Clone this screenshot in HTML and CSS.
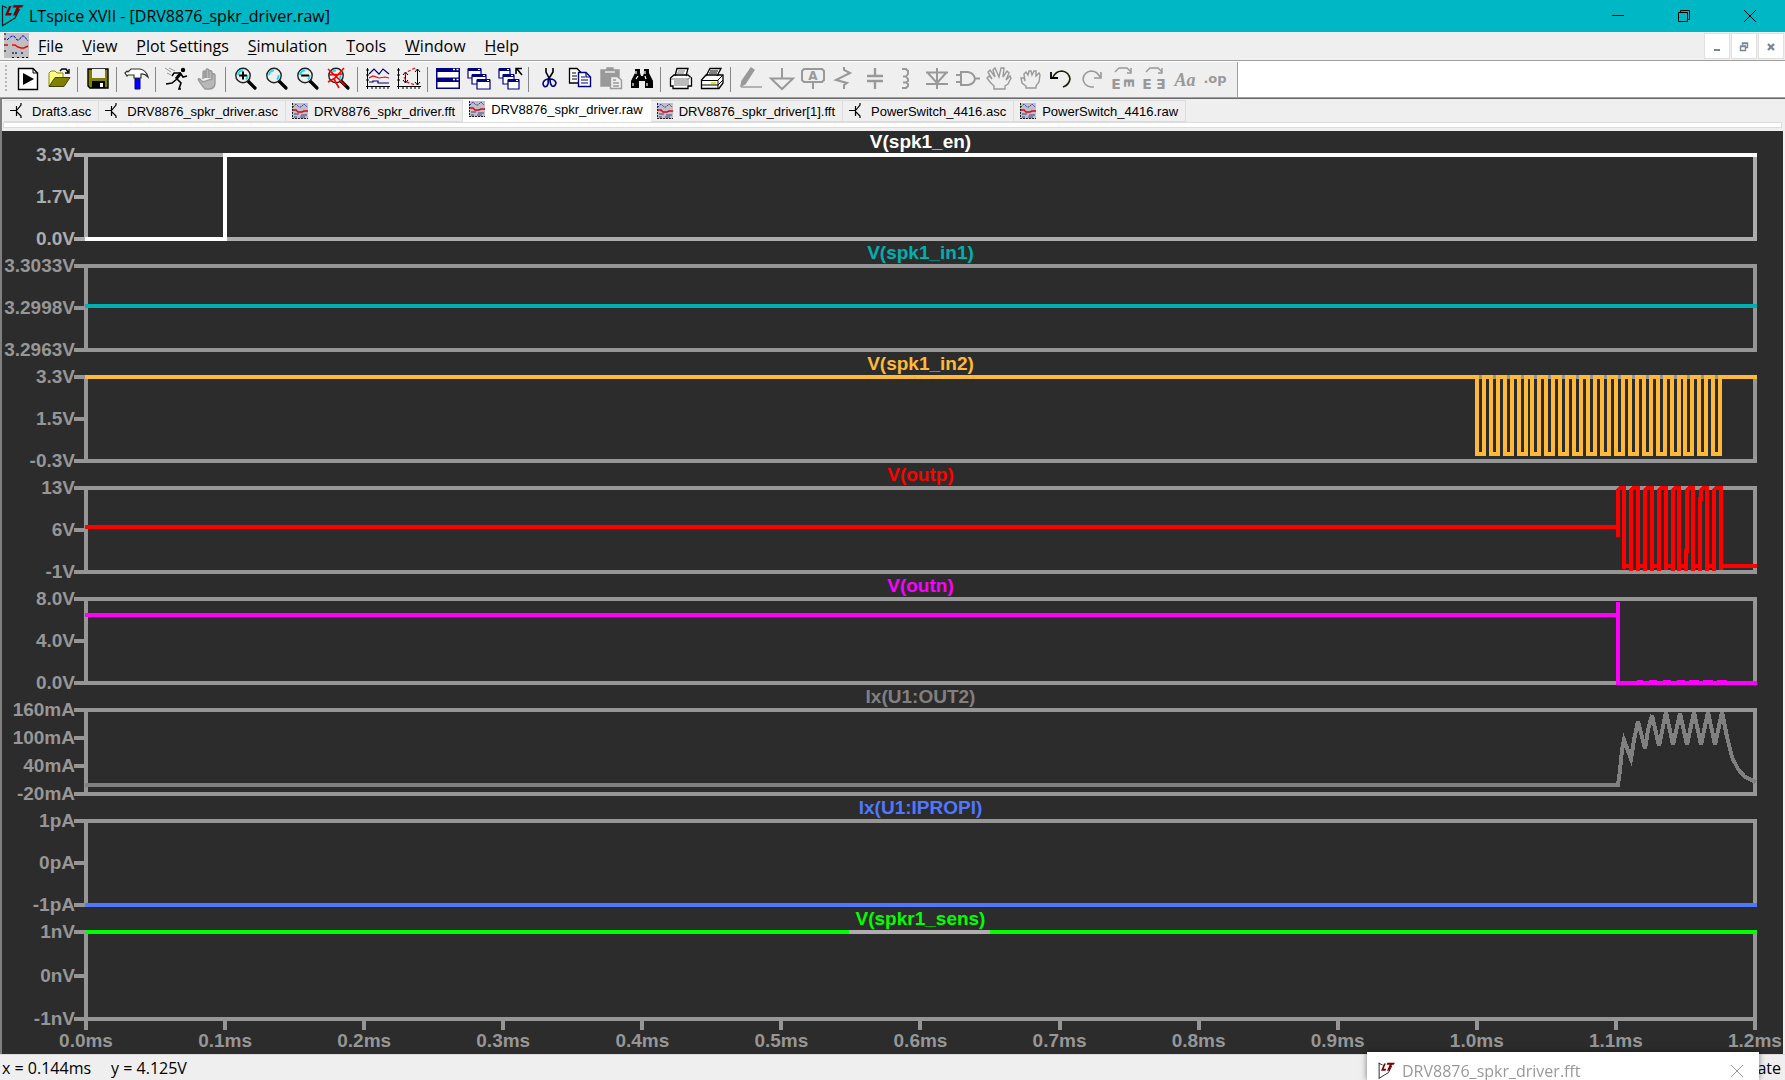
FILE: index.html
```html
<!DOCTYPE html>
<html lang="en">
<head>
    <meta charset="UTF-8">
    <meta name="viewport" content="width=device-width, initial-scale=1.0">
    <title>LTspice XVII - [DRV8876_spkr_driver.raw]</title>
    <link rel="stylesheet" href="styles.css">
</head>
<body>
    <svg class="defs" aria-hidden="true">
        <symbol id="logo" viewBox="0 0 24 24">
            <path d="M1.500 1V22M1 1.500L6 4M1 22L14 14L18.500 5" fill="none" stroke="#1a1a1a" stroke-width="1.200"/>
            <path d="M8 2H10.500L7.500 9H11L10 11.500H4Z" fill="#800000"/>
            <path d="M12.500 1H22.500L21 3.500H18.500L15 11.500H12L15.500 3.500H11.500Z" fill="#800000"/>
        </symbol>
        <symbol id="wave" viewBox="0 0 25 25">
            <rect width="25" height="25" fill="#c0c0c0"/>
            <path d="M3 7L5 5L8 3L10 3L13 7L15 7L18 3L20 3L24 8" fill="none" stroke="#0000ff" stroke-dasharray="3 1"/>
            <path d="M2 12H4M8 12H11L14 14L17 15H20L24 13" fill="none" stroke="#f00" stroke-width="1.4"/>
            <path d="M9 19V21M12 19V21M18 19V21" stroke="#000080" stroke-width="1.2"/>
            <path d="M0 1H2M0 6H2M0 12H2M0 18H2M8 24.5H10M13 24.5H15M18 24.5H20M22 24.5H24" stroke="#000"/>
        </symbol>
        <symbol id="trace" viewBox="0 0 16 16">
            <rect width="16" height="16" fill="#c0c0c0"/>
            <path d="M1 4L4 1L7 4L9 4L12 1L15 4" fill="none" stroke="#3030e0" stroke-dasharray="2 1"/>
            <path d="M1 7H4L6 9H10L12 8H16" fill="none" stroke="#e00020" stroke-width="1.4"/>
            <path d="M2 11H7M9 12H15M2 14H5M8 14H13" stroke="#404090"/>
            <path d="M.5 0V16M0 15.5H16" stroke="#222" stroke-dasharray="2 1"/>
        </symbol>
        <symbol id="gate" viewBox="0 0 16 16">
            <path d="M0 7.5H6M6.5 3V13M7 7L11 2V0M7 9L11 13V15" fill="none" stroke="#000" stroke-width="1.2"/>
        </symbol>
        <symbol id="lens" viewBox="0 0 24 24">
            <path d="M14 14L21 21" stroke="#000" stroke-width="3.2" stroke-linecap="round"/>
            <circle cx="9" cy="8.5" r="7.2" fill="#efefef" stroke="#222" stroke-width="1.4"/>
            <path d="M4 8A5 5 0 0 1 9 3.500M12 12.500A5 5 0 0 0 13.500 8" fill="none" stroke="#00e5f0" stroke-width="1.800"/>
        </symbol>
    </svg>

    <header class="titlebar">
        <svg class="logo"><use href="#logo"/></svg>
        <h1>LTspice XVII - [DRV8876_spkr_driver.raw]</h1>
        <div class="window-buttons">
            <button aria-label="Minimize"><svg viewBox="0 0 12 12"><path d="M0 5.500H12"/></svg></button>
            <button aria-label="Restore"><svg viewBox="0 0 12 12"><path d="M.5 2.500H9.500V11.500H.5ZM2.500 2V.5H11.500V9.500H10"/></svg></button>
            <button aria-label="Close"><svg viewBox="0 0 12 12"><path d="M0 0L12 12M12 0L0 12"/></svg></button>
        </div>
    </header>

    <nav class="menubar">
        <svg class="menu-icon"><use href="#wave"/></svg>
        <button><u>F</u>ile</button>
        <button><u>V</u>iew</button>
        <button><u>P</u>lot Settings</button>
        <button><u>S</u>imulation</button>
        <button><u>T</u>ools</button>
        <button><u>W</u>indow</button>
        <button><u>H</u>elp</button>
        <div class="child-buttons">
            <button aria-label="Minimize plot"><svg viewBox="0 0 10 10"><path d="M2 8H8" stroke-width="2"/></svg></button>
            <button aria-label="Restore plot"><svg viewBox="0 0 10 10"><path d="M3.500 3V1.500H8.500V5.500H7M1.500 4.500H6.500V8.500H1.500ZM1 4H7M3 1H9" stroke-width="1.400"/></svg></button>
            <button aria-label="Close plot"><svg viewBox="0 0 10 10"><path d="M2 2L8 8M8 2L2 8" stroke-width="2.400"/></svg></button>
        </div>
    </nav>

    <div class="toolbar-row">
        <div class="toolbar" role="toolbar" aria-label="Main toolbar">
            <span class="grip"></span>
            <button aria-label="Run"><svg viewBox="0 0 24 24"><path d="M2.500 1.500H17L21.500 6V22.500H2.500Z" fill="#fff" stroke="#000" stroke-width="1.400"/><path d="M17 1.500V6H21.500" fill="none" stroke="#000"/><path d="M7 6L18 12L7 18Z"/></svg></button>
            <button aria-label="Open"><svg viewBox="0 0 24 24"><path d="M2 19V6L4 4H8L10 6H16V10" fill="#ffff80" stroke="#888800"/><path d="M2 19.500L8 10.500H23L17 19.500Z" fill="#808000" stroke="#404000"/><path d="M13 4L15 2H19L21 5M22 2V6H18" fill="none" stroke="#000" stroke-width="1.400"/></svg></button>
            <span class="sep"></span>
            <button aria-label="Save"><svg viewBox="0 0 24 24"><path d="M2 2H22V21H4L2 19Z" fill="#808000" stroke="#000" stroke-width="1.400"/><path d="M6 2H19V11H6Z" fill="#efefef"/><path d="M6 14H19V21H6Z"/><path d="M14 16H17V20H14Z" fill="#fff"/></svg></button>
            <span class="sep"></span>
            <button aria-label="Control panel"><svg viewBox="0 0 24 24"><path d="M10 11H15V22H10Z" fill="#0000ff" stroke="#000080"/><path d="M0 6L2 4L3 5L6 2H15Q21 3 23 10Q19 6 16 7V11H9V8H6L3 8L2 9Z" fill="#fff" stroke="#333" stroke-width="1.200"/></svg></button>
            <span class="sep"></span>
            <button aria-label="Run simulation"><svg viewBox="0 0 24 24"><circle cx="19" cy="3" r="2.200"/><path d="M17 6L12 12" stroke="#000" stroke-width="3"/><path d="M13 12L17 16L15 22H17M13 12L8 16L2 17M17 6L10 6L8 9M17 7L19 10L23 9" fill="none" stroke="#000" stroke-width="1.600"/><path d="M1 1L7 5M5 1L11 4M3 6L7 8" stroke="#999"/></svg></button>
            <button aria-label="Halt"><svg viewBox="0 0 24 24" class="off"><path d="M8 12V5Q9 3 10 5V11M11 11V3Q12 1 14 3V11M14 11V4Q16 3 17 5V12M17 12V7Q19 6 20 8V17Q19 22 14 22H10Q7 19 4 14Q2 11 5 12L8 15Z" fill="#b8b8b8"/></svg></button>
            <span class="sep"></span>
            <button aria-label="Zoom in"><svg viewBox="0 0 24 24"><use href="#lens"/><path d="M5 8.500H13M9 4.500V12.500" stroke="#000" stroke-width="2"/></svg></button>
            <button aria-label="Pan"><svg viewBox="0 0 24 24"><use href="#lens"/></svg></button>
            <button aria-label="Zoom out"><svg viewBox="0 0 24 24"><use href="#lens"/><path d="M5 8.500H13" stroke="#000" stroke-width="2"/></svg></button>
            <button aria-label="Zoom full extents"><svg viewBox="0 0 24 24"><use href="#lens"/><path d="M1 2L18 18M17 1L8 11L1 15M2 8L15 7M7 12L12 21" fill="none" stroke="#f00" stroke-width="1.600"/></svg></button>
            <span class="sep"></span>
            <button aria-label="Autorange"><svg viewBox="0 0 24 24"><path d="M1.500 1V22M0 19.500H24M0 3H3M0 8H3M0 13H3M6 19V22M10 19V22M14 19V22M18 19V22M22 19V22" stroke="#000" stroke-width="1"/><path d="M3 7L8 2L13 7L17 2L23 7M3 15H7V14H12V16H23" fill="none" stroke="#000080" stroke-width="1.200"/><path d="M3 11L7 9L13 11L19 10L23 11" fill="none" stroke="#f00" stroke-width="1.200"/></svg></button>
            <button aria-label="Plot settings"><svg viewBox="0 0 24 24"><path d="M1.500 1V22M0 19.500H24M0 3H3M0 8H3M0 13H3M6 19V22M10 19V22M14 19V22M18 19V22M22 19V22M8.500 6V15M6 8L8.500 5L11 8M6 13L8.500 16L11 13M20.500 2V18M18 5L20.500 2L23 5M18 15L20.500 18L23 15" fill="none" stroke="#000" stroke-width="1"/><path d="M18 1L10 5L7 10L10 15L18 18" fill="none" stroke="#f00" stroke-width="1.200" stroke-dasharray="3 2"/></svg></button>
            <span class="sep"></span>
            <button aria-label="Tile windows"><svg viewBox="0 0 24 24"><path d="M0 1H24V22H0Z" fill="#000080"/><path d="M1.500 5H22.500V10.500H1.500ZM1.500 15H22.500V20.500H1.500Z" fill="#fff"/><path d="M17 2.500H19M20.500 2.500H22.500M17 12.500H19M20.500 12.500H22.500" stroke="#fff" stroke-width="1.400"/></svg></button>
            <button aria-label="Cascade windows"><svg viewBox="0 0 24 24"><g fill="#fff" stroke="#000080" stroke-width="1.200"><path d="M1 2H14V11H1Z"/><path d="M5 8H19V17H5Z"/><path d="M10 13H23V22H10Z"/></g><path d="M1 1H14V4H1ZM5 7H19V10H5ZM10 12H23V15H10Z" fill="#000080"/><path d="M11 2.500H13M16 8.500H18M20 13.500H22" stroke="#fff" stroke-width="1.200"/></svg></button>
            <button aria-label="Close windows"><svg viewBox="0 0 24 24"><g fill="#fff" stroke="#000080" stroke-width="1.200"><path d="M1 2H12V11H1Z"/><path d="M5 8H16V17H5Z"/><path d="M10 13H21V22H10Z"/></g><path d="M1 1H12V4H1ZM5 7H16V10H5ZM10 12H21V15H10Z" fill="#000080"/><path d="M9 2.500H11M13 8.500H15M18 13.500H20" stroke="#fff" stroke-width="1.200"/><path d="M24 8L19 2M18 7V1.500H24" fill="none" stroke="#000" stroke-width="1.600"/></svg></button>
            <span class="sep"></span>
            <button aria-label="Cut"><svg viewBox="0 0 24 24"><path d="M9 1V5L13 13M16 1V5L11 13" fill="none" stroke="#000" stroke-width="1.600"/><path d="M11 12Q6 13 6 17Q7 21 10 19Q12 16 11 12ZM13 12Q18 12 19 16Q18 20 15 19Q13 17 13 12Z" fill="none" stroke="#000080" stroke-width="1.600"/></svg></button>
            <button aria-label="Copy"><svg viewBox="0 0 24 24"><path d="M1.500 1.500H9L13.500 6V16H1.500Z" fill="#fff" stroke="#000" stroke-width="1.300"/><path d="M10.500 5.500H18L22.500 10V19.500H10.500Z" fill="#fff" stroke="#000080" stroke-width="1.400"/><path d="M4 6H8M4 9H9M4 12H9" stroke="#000"/><path d="M13 10H17M13 13H20M13 16H20M18 6V10H22" fill="none" stroke="#000080" stroke-width="1.200"/></svg></button>
            <button aria-label="Paste"><svg viewBox="0 0 24 24" class="off"><path d="M2 3H8V1H14V3H20V19H2Z" fill="#999"/><path d="M6 5H16" stroke="#efefef"/><path d="M11.500 9.500H18L22.500 13V21.500H11.500Z" fill="#efefef"/><path d="M14 13H17M14 16H20M14 19H20"/></svg></button>
            <button aria-label="Find"><svg viewBox="0 0 24 24"><path d="M5 2H10V6L11 9H13L14 6V2H19V6L23 14V21H15V14H9V21H1V14L5 6Z"/><path d="M6 4V7M15 4V7M3 16V19M17 16V19M8 9L6 12M15 9L16 12" stroke="#fff" stroke-width="1.200"/></svg></button>
            <span class="sep"></span>
            <button aria-label="Print setup"><svg viewBox="0 0 24 24"><path d="M6 9L8 1.500H19L17 9M1.500 11L5 8H19L22.500 11V19H19V21.500H4V19H1.500Z" fill="#fff" stroke="#000" stroke-width="1.300"/><path d="M9 4H16M8 6H15M2 12H19V18M5 14H18M5 16H18M5 18H18M19 12L22 10" fill="none" stroke="#777"/></svg></button>
            <button aria-label="Print"><svg viewBox="0 0 24 24"><path d="M6 9L10 1.500H21L17 9M1.500 13L6 8H19L23 8V16L19 21.500H1.500Z" fill="#fff" stroke="#000" stroke-width="1.300"/><path d="M1 13.500H18V21M18 13L23 8M10 4H18M9 6H17M2 18H18M18 18L23 13" fill="none" stroke="#000"/><path d="M11 16H16" stroke="#e8e800" stroke-width="2"/></svg></button>
            <span class="sep"></span>
            <button aria-label="Wire"><svg viewBox="0 0 24 24" class="off"><path d="M12 1L15 3L6 17L2 19L3 14Z" fill="#999"/><path d="M2 20H23"/></svg></button>
            <button aria-label="Ground"><svg viewBox="0 0 24 24" class="off wide"><path d="M12 1V11M1 11.500H23L12 22Z"/></svg></button>
            <button aria-label="Label net"><svg viewBox="0 0 24 24" class="off wide"><path d="M3 2H21L23 4V13L21 15H3L1 13V4ZM12 15V22"/><text x="12" y="13" class="glyph mono">A</text></svg></button>
            <button aria-label="Resistor"><svg viewBox="0 0 24 24" class="off wide"><path d="M12 0V3L18 6L4 13L15 16L12 18V22"/></svg></button>
            <button aria-label="Capacitor"><svg viewBox="0 0 24 24" class="off"><path d="M12 1V8M4 9H20M4 14H20M12 14V22" stroke-width="2.400"/></svg></button>
            <button aria-label="Inductor"><svg viewBox="0 0 24 24" class="off wide"><path d="M8 2H12L14 4V7L12 9.500H9M12 9.500L14 12V14L12 15.500H9M12 15.500L14 17V19L12 21H8"/></svg></button>
            <button aria-label="Diode"><svg viewBox="0 0 24 24" class="off wide"><path d="M12 1V22M1 5.500H23M3 6L12 16L21 6M1 17H23"/></svg></button>
            <button aria-label="Component"><svg viewBox="0 0 24 24" class="off wide"><path d="M5 5H12Q18 6 19 12Q18 17 12 18H5ZM0 8H5M0 15H5M19 11.500H24"/></svg></button>
            <button aria-label="Move"><svg viewBox="0 0 24 24" class="off"><path d="M7 22V19L3 15L0 11L2 9L5 12L1 5L3 3L8 10L6 3L8 1L12 10L14 1H17L16 10L20 4L22 6L19 13L23 9L24 11L21 17L18 19V22Z"/></svg></button>
            <button aria-label="Drag"><svg viewBox="0 0 24 24" class="off"><path d="M8 21V19L4 16L3 11H6L7 14L6 7L8 5L10 8L11 4L13 4L14 8L16 4H18L18 9L21 6L22 8L21 15L18 19V21Z"/></svg></button>
            <button aria-label="Undo"><svg viewBox="0 0 24 24"><path d="M4 10Q7 4 13 4Q20 5 21 12Q20 18 14 20" fill="none" stroke="#202000" stroke-width="1.600"/><path d="M2 5V11H9" fill="none" stroke="#000" stroke-width="1.800"/></svg></button>
            <button aria-label="Redo"><svg viewBox="0 0 24 24" class="off wide"><path d="M20 10Q17 4 11 4Q4 5 3 12Q4 19 11 20H14M21 5V11H14" stroke-width="1.600"/></svg></button>
            <button aria-label="Rotate"><svg viewBox="0 0 24 24" class="off"><path d="M4 5L8 1H16L20 5M20 1V6H16"/><text x="5" y="22" class="glyph">E</text><text x="16" y="-13" class="glyph" transform="rotate(90)">E</text></svg></button>
            <button aria-label="Mirror"><svg viewBox="0 0 24 24" class="off"><path d="M4 5L8 1H16L20 5M20 1V6H16"/><text x="5" y="22" class="glyph">E</text><text x="-19" y="-12" class="glyph" transform="rotate(180)">E</text></svg></button>
            <button aria-label="Text"><svg viewBox="0 0 24 24" class="off"><text x="12" y="19" class="glyph script">Aa</text></svg></button>
            <button aria-label="SPICE directive"><svg viewBox="0 0 24 24" class="off"><text x="11" y="16" class="glyph op">.op</text></svg></button>
        </div>
    </div>

    <main class="workspace">
        <nav class="tabs">
            <a href="#draft3"><svg><use href="#gate"/></svg>Draft3.asc</a>
            <a href="#driver-asc"><svg><use href="#gate"/></svg>DRV8876_spkr_driver.asc</a>
            <a href="#driver-fft"><svg><use href="#trace"/></svg>DRV8876_spkr_driver.fft</a>
            <a href="#driver-raw" class="active" aria-current="page"><svg><use href="#trace"/></svg>DRV8876_spkr_driver.raw</a>
            <a href="#driver-1-fft"><svg><use href="#trace"/></svg>DRV8876_spkr_driver[1].fft</a>
            <a href="#switch-asc"><svg><use href="#gate"/></svg>PowerSwitch_4416.asc</a>
            <a href="#switch-raw"><svg><use href="#trace"/></svg>PowerSwitch_4416.raw</a>
        </nav>
        <div class="tab-line"></div>

        <div class="plots">
            <section class="pane selected">
                <h2 class="white">V(spk1_en)</h2>
                <div class="scale"><span>3.3V</span><span>1.7V</span><span>0.0V</span></div>
                <svg viewBox="0 0 1673 88" preserveAspectRatio="none"><rect x="2" y="2" width="1669" height="84"/><path class="white" d="M1 86H141V2H1673"/></svg>
            </section>
            <section class="pane">
                <h2 class="teal">V(spk1_in1)</h2>
                <div class="scale"><span>3.3033V</span><span>3.2998V</span><span>3.2963V</span></div>
                <svg viewBox="0 0 1673 88" preserveAspectRatio="none"><rect x="2" y="2" width="1669" height="84"/><path class="teal" d="M1 42H1673"/></svg>
            </section>
            <section class="pane">
                <h2 class="orange">V(spk1_in2)</h2>
                <div class="scale"><span>3.3V</span><span>1.5V</span><span>-0.3V</span></div>
                <svg viewBox="0 0 1673 88" preserveAspectRatio="none"><rect x="2" y="2" width="1669" height="84"/><path class="orange" d="M1 2H1393V79H1400V2H1407V79H1414V2H1421V79H1428V2H1435V79H1442V2H1448V79H1455V2H1462V79H1469V2H1476V79H1483V2H1490V79H1497V2H1504V79H1511V2H1518V79H1525V2H1532V79H1539V2H1546V79H1553V2H1560V79H1567V2H1574V79H1581V2H1588V79H1595V2H1601V79H1608V2H1615V79H1622V2H1629V79H1636V2H1673"/></svg>
            </section>
            <section class="pane">
                <h2 class="red">V(outp)</h2>
                <div class="scale"><span>13V</span><span>6V</span><span>-1V</span></div>
                <svg viewBox="0 0 1673 88" preserveAspectRatio="none"><rect x="2" y="2" width="1669" height="84"/><path class="red" d="M1 41H1534V51V4L1536 2H1540V83V80H1547V85V4L1549 2H1554V85V80H1561V85V4L1563 2H1568V85V80H1575V85V4L1577 2H1582V84V80H1589V85V4L1591 2H1595V85V80H1602V85V65H1603V4L1605 2H1609V85V80H1616V85V13H1617V4L1619 2H1623V85V80H1630V85V4L1632 2H1637V84V80H1673"/></svg>
            </section>
            <section class="pane">
                <h2 class="magenta">V(outn)</h2>
                <div class="scale"><span>8.0V</span><span>4.0V</span><span>0.0V</span></div>
                <svg viewBox="0 0 1673 88" preserveAspectRatio="none"><rect x="2" y="2" width="1669" height="84"/><path class="magenta" d="M1 18H1534V5V86H1673M1553 85H1559M1565 85H1573M1579 85H1587M1593 85H1601M1605 85H1615M1619 85H1629M1633 85H1643"/></svg>
            </section>
            <section class="pane">
                <h2 class="gray">Ix(U1:OUT2)</h2>
                <div class="scale"><span>160mA</span><span>100mA</span><span>40mA</span><span>-20mA</span></div>
                <svg viewBox="0 0 1673 88" preserveAspectRatio="none"><rect x="2" y="2" width="1669" height="84"/><path class="gray" d="M1 77H1534L1536 62L1538 42L1540 32L1547 51L1550 32L1554 13L1561 41L1564 22L1568 7L1575 38L1582 4L1589 37L1596 5L1603 37L1610 4L1617 37L1624 4L1631 37L1638 4L1643 29L1648 49L1654 61L1661 69L1672 74"/></svg>
            </section>
            <section class="pane">
                <h2 class="blue">Ix(U1:IPROPI)</h2>
                <div class="scale"><span>1pA</span><span>0pA</span><span>-1pA</span></div>
                <svg viewBox="0 0 1673 88" preserveAspectRatio="none"><rect x="2" y="2" width="1669" height="84"/><path class="blue" d="M1 86H1673"/></svg>
            </section>
            <section class="pane last">
                <h2 class="green">V(spkr1_sens)</h2>
                <div class="scale"><span>1nV</span><span>0nV</span><span>-1nV</span></div>
                <svg viewBox="0 0 1673 91" preserveAspectRatio="none"><rect x="2" y="2" width="1669" height="87"/><path class="green" d="M1 2H1673"/><path class="light" d="M765 2H906"/></svg>
            </section>
            <div class="time-axis">
                <span>0.0ms</span><span>0.1ms</span><span>0.2ms</span><span>0.3ms</span><span>0.4ms</span><span>0.5ms</span><span>0.6ms</span><span>0.7ms</span><span>0.8ms</span><span>0.9ms</span><span>1.0ms</span><span>1.1ms</span><span>1.2ms</span>
            </div>
        </div>
    </main>

    <footer class="statusbar">
        <span>x = 0.144ms</span>
        <span>y = 4.125V</span>
        <span class="mode">ate</span>
    </footer>

    <aside class="preview">
        <svg class="logo"><use href="#logo"/></svg>
        <span>DRV8876_spkr_driver.fft</span>
        <button aria-label="Close preview"><svg viewBox="0 0 12 12"><path d="M0 0L12 12M12 0L0 12"/></svg></button>
    </aside>
</body>
</html>
```
FILE: styles.css
```css
* {
    box-sizing: border-box;
}

body {
    display: flex;
    flex-direction: column;
    height: 100vh;
    margin: 0;
    overflow: hidden;
    background: #efefef;
    color: #000;
    font-family: "Open Sans", "Noto Sans", sans-serif;
    font-size: 16px;
}

button {
    padding: 0;
    border: none;
    background: none;
    color: inherit;
    font: inherit;
}

.defs {
    position: absolute;
    width: 0;
    height: 0;
}

.logo {
    width: 24px;
    height: 24px;
}

/* title bar */
.titlebar {
    display: flex;
    align-items: center;
    gap: 4px;
    height: 32px;
    padding: 0 2px 1px 1px;
    background: #00b7c5;
}

.titlebar h1 {
    margin: 0;
    font-size: 16px;
    font-weight: normal;
}

.window-buttons {
    display: flex;
    margin-left: auto;
}

.window-buttons button {
    width: 66px;
    height: 30px;
}

.window-buttons svg {
    width: 12px;
    height: 12px;
    fill: none;
    stroke: #000;
    overflow: visible;
}

/* menu */
.menubar {
    display: flex;
    align-items: center;
    gap: 19px;
    height: 29px;
    padding: 0 1px 1px 4px;
    border-bottom: 1px solid #a0a0a0;
}

.menubar u {
    text-underline-offset: 2px;
}

.menu-icon {
    width: 25px;
    height: 25px;
    margin-right: -10px;
}

.child-buttons {
    display: flex;
    gap: 1px;
    margin-left: auto;
}

.child-buttons button {
    width: 26px;
    height: 26px;
    border: 1px solid #e0e0e0;
    background: #fff;
}

.child-buttons svg {
    width: 10px;
    height: 10px;
    fill: none;
    stroke: #7a8595;
}

/* toolbar */
.toolbar-row {
    display: flex;
    height: 37px;
    padding-top: 1px;
    border-bottom: 1px solid #a0a0a0;
    background: #fff;
}

.toolbar {
    display: flex;
    align-items: center;
    padding: 0 6px 1px 5px;
    border-right: 1px solid #a0a0a0;
    background: #efefef;
}

.toolbar button {
    display: flex;
    justify-content: center;
    width: 31px;
}

.toolbar svg {
    width: 24px;
    height: 24px;
    overflow: visible;
}

.toolbar .off {
    fill: none;
    stroke: #999;
    stroke-width: 1.4;
}

.toolbar .wide {
    stroke-width: 2;
}

.grip {
    width: 2px;
    height: 28px;
    margin-right: 5px;
    background: repeating-linear-gradient(#b8b8b8 0 2px, #efefef 2px 4px);
}

.sep {
    width: 8px;
    height: 25px;
    padding: 0 4px 0 3px;
    background: #888;
    background-clip: content-box;
}

.glyph {
    fill: #999;
    stroke: none;
    font: bold 14px "DejaVu Sans", sans-serif;
    text-anchor: middle;
}

.glyph.mono {
    font-size: 12px;
}

.glyph.script {
    font: italic bold 18px "Liberation Serif", serif;
}

.glyph.op {
    font-size: 13px;
}

/* documents */
.workspace {
    display: flex;
    flex: 1;
    flex-direction: column;
    min-height: 0;
    padding-right: 2px;
    border-top: 1px solid #696969;
    border-left: 2px solid #808080;
}

.tabs {
    display: flex;
    align-items: flex-end;
    height: 23px;
    padding-left: 2px;
    font-family: "Liberation Sans", Arial, sans-serif;
    font-size: 13px;
}

.tabs a {
    display: flex;
    align-items: center;
    gap: 6px;
    height: 22px;
    padding: 0 7px 0 6px;
    border: 1px solid #dcdcdc;
    border-left: none;
    color: #000;
    text-decoration: none;
}

.tabs svg {
    width: 16px;
    height: 16px;
}

.tabs .active {
    height: 23px;
    padding-bottom: 3px;
    border-color: #fff;
    background: #fff;
}

.tab-line {
    height: 6px;
    margin: 0 1px 3px;
    border: 1px solid #dcdcdc;
    background: #fff;
}

/* plots */
.plots {
    display: flex;
    flex: 1;
    flex-direction: column;
    gap: 1px;
    min-height: 0;
    padding-right: 26px;
    background: #2c2c2c;
    color: #969696;
    font-family: "Liberation Sans", Arial, sans-serif;
    font-size: 19px;
    font-weight: bold;
    line-height: 22px;
}

.pane {
    display: grid;
    flex: 110;
    grid-template-columns: 82px 1fr;
    grid-template-rows: 22px 1fr;
    min-height: 0;
}

.pane.last {
    flex: 113;
}

.pane h2 {
    grid-column: 2;
    margin: 0;
    color: var(--trace);
    font-size: inherit;
    text-align: center;
}

.scale {
    display: flex;
    flex-direction: column;
    justify-content: space-between;
    margin: -9px 0;
    text-align: right;
}

.scale span {
    display: flex;
    align-items: center;
    justify-content: flex-end;
}

.scale span::after {
    width: 10px;
    height: 4px;
    margin-left: -1px;
    background: #969696;
    content: "";
}

.pane svg {
    width: 100%;
    height: 100%;
    min-height: 0;
    fill: none;
    stroke: #969696;
    stroke-width: 4;
    shape-rendering: crispEdges;
}

.pane path {
    stroke: var(--trace);
}

.selected svg {
    stroke: #acacac;
}

.selected .scale {
    color: #acacac;
}

.selected .scale span::after {
    background: #acacac;
}

.white { --trace: #fff; }
.teal { --trace: #00b0b0; }
.orange { --trace: #ffb938; }
.red { --trace: #f00; }
.magenta { --trace: #f0f; }
.gray { --trace: #808080; }
.blue { --trace: #5078ff; }
.green { --trace: #0f0; }
.light { --trace: #b0acb0; }

.time-axis {
    display: flex;
    justify-content: space-between;
    height: 33px;
    margin: -1px 0 0 82px;
}

.time-axis span {
    display: flex;
    flex-direction: column;
    align-items: center;
    width: 4px;
}

.time-axis span::before {
    flex: none;
    width: 4px;
    height: 9px;
    background: #969696;
    content: "";
}

/* status */
.statusbar {
    display: flex;
    align-items: center;
    gap: 20px;
    height: 26px;
    padding: 0 4px 0 2px;
    border-top: 1px solid #dcdcdc;
}

.mode {
    margin-left: auto;
}

/* taskbar preview lying over the status bar */
.preview {
    position: fixed;
    right: 26px;
    bottom: 0;
    display: flex;
    align-items: center;
    gap: 4px;
    width: 392px;
    height: 28px;
    padding: 10px 16px 0 9px;
    background: #fff;
    box-shadow: 0 0 6px rgba(0, 0, 0, 0.5);
    color: #999;
    line-height: 18px;
}

.preview .logo {
    height: 18px;
    width: 22px;
}

.preview button {
    margin-left: auto;
}

.preview button svg {
    width: 12px;
    height: 12px;
    fill: none;
    stroke: #999;
}
```
